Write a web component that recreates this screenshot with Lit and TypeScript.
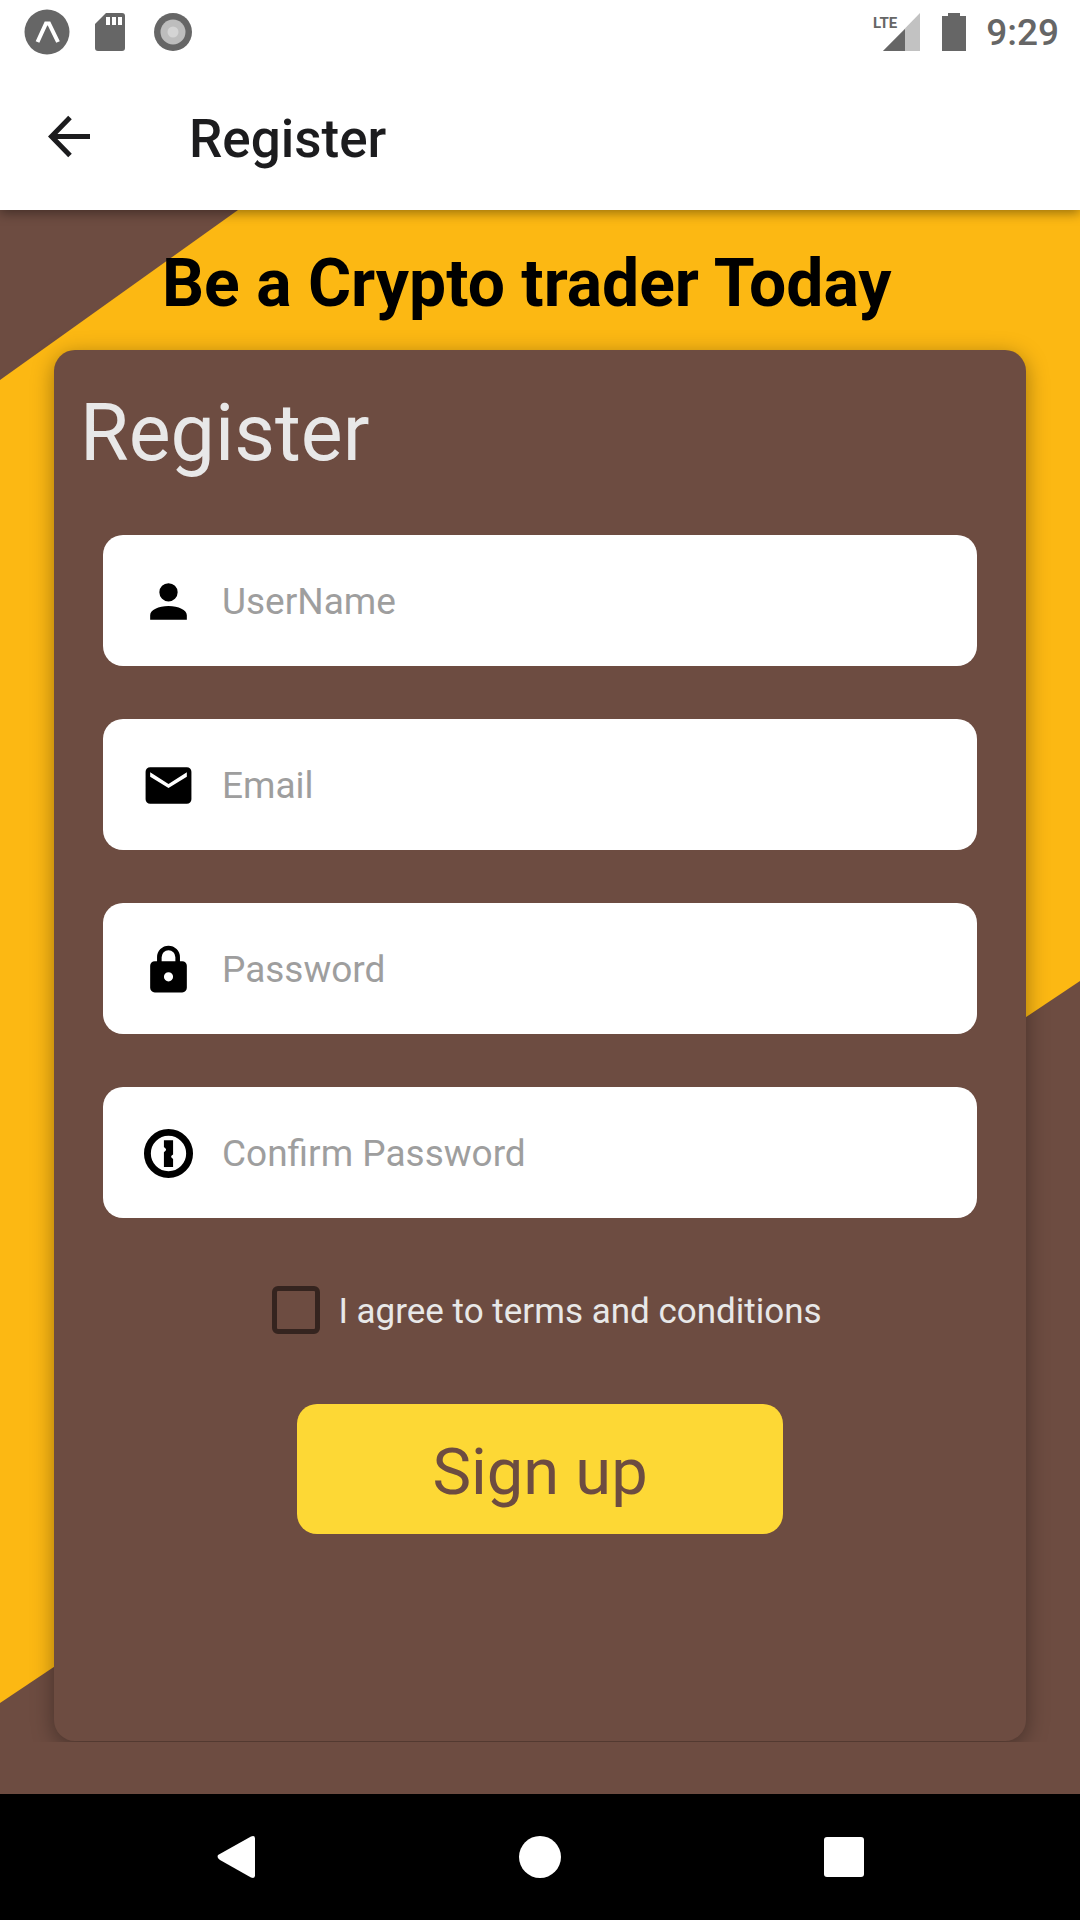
import { LitElement, html, css, svg } from "lit";
import { customElement } from "lit/decorators.js";

interface Field {
  id: string;
  type: string;
  label: string;
  icon: unknown;
}

const FIELDS: Field[] = [
  {
    id: "username",
    type: "text",
    label: "UserName",
    icon: svg`<path d="M12 4a4 4 0 1 1 0 8 4 4 0 0 1 0-8zM12 14c4.400 0 8 1.800 8 4v2H4v-2c0-2.200 3.600-4 8-4z"/>`,
  },
  {
    id: "email",
    type: "email",
    label: "Email",
    icon: svg`<path d="M20 8.200L12 13.100 4 8.200V6.200L12 11.300l8-5.100zM20 4H4a2 2 0 0 0-2 2v12a2 2 0 0 0 2 2h16a2 2 0 0 0 2-2V6a2 2 0 0 0-2-2z"/>`,
  },
  {
    id: "password",
    type: "password",
    label: "Password",
    icon: svg`<path d="M12 17.200a2 2 0 1 0 0-4 2 2 0 0 0 0 4zM18 8.400a2 2 0 0 1 2 2V20a2 2 0 0 1-2 2H6a2 2 0 0 1-2-2v-9.600a2 2 0 0 1 2-2h1V6.600a5 5 0 0 1 10 0v1.800zM12 3.600a3 3 0 0 0-3 3v1.800h6V6.600a3 3 0 0 0-3-3z"/>`,
  },
  {
    id: "confirm",
    type: "password",
    label: "Confirm Password",
    icon: svg`<circle cx="12" cy="12" r="9.200" fill="none" stroke="currentColor" stroke-width="3"/>
      <path d="M10 6.200h4v6.200l-.6.500c-.3.300-.3.700 0 1l.6.500v3.500h-4v-6.500l.7-.6c.3-.3.3-.7 0-1L10 9.200z"/>`,
  },
];

@customElement("app-root")
export class AppRoot extends LitElement {
  static styles = css`
    :host {
      display: flex;
      flex-direction: column;
      min-height: 100vh;
      font-family: Roboto, "Liberation Sans", sans-serif;
      background: #6d4c41;
    }
    * {
      box-sizing: border-box;
    }
    h1,
    h2,
    p {
      margin: 0;
    }
    svg {
      display: block;
      flex: none;
    }
    button {
      border: 0;
      padding: 0;
      background: none;
      font: inherit;
      color: inherit;
      cursor: pointer;
    }
    .status {
      position: relative;
      z-index: 2;
      display: flex;
      justify-content: space-between;
      align-items: center;
      height: 63px;
      padding: 0 21px 0 24px;
      background: #fff;
      color: #666;
    }
    .group {
      display: flex;
      align-items: center;
    }
    .notices {
      gap: 24px;
    }
    .signals {
      gap: 20px;
    }
    .clock {
      padding-top: 2px;
      font-size: 37px;
      line-height: 64px;
      font-weight: 500;
    }
    .bar {
      display: flex;
      align-items: center;
      gap: 90px;
      height: 147px;
      padding: 2px 43px 0;
      background: #fff;
      color: #1c1c1e;
      position: relative;
      z-index: 1;
      box-shadow: 0 3px 11px rgba(0, 0, 0, 0.4);
    }
    .bar-title {
      padding-top: 2px;
      font-size: 53px;
      line-height: 64px;
      font-weight: 500;
    }
    .body {
      position: relative;
      flex: 1;
      display: flex;
      flex-direction: column;
      padding-bottom: 52px;
    }
    .backdrop {
      position: absolute;
      inset: 0;
      width: 100%;
      height: 100%;
    }
    .content {
      position: relative;
      flex: 1;
      display: flex;
      flex-direction: column;
      padding: 34px 5% 1px;
      overflow: hidden;
    }
    .headline {
      padding: 0 0 26px 108px;
      font-size: 66px;
      line-height: 80px;
      font-weight: 700;
      color: #000;
    }
    .card {
      flex: 1;
      padding: 37px 26px;
      border-radius: 21px;
      background: #6d4c41;
      box-shadow: 0 5px 22px rgba(0, 0, 0, 0.36);
      color: #e8e8e8;
    }
    .card-title {
      font-size: 79px;
      line-height: 92px;
      font-weight: 400;
    }
    .form {
      display: flex;
      flex-direction: column;
      align-items: center;
      gap: 53px;
      padding: 56px 23px 0;
    }
    .field {
      display: flex;
      align-items: center;
      gap: 26px;
      width: 100%;
      height: 131px;
      padding: 2px 38px 0;
      border-radius: 20px;
      background: #fff;
      color: #000;
    }
    .input {
      flex: 1;
      min-width: 0;
      border: 0;
      padding: 0;
      outline: 0;
      background: none;
      font: inherit;
      font-size: 37px;
      line-height: 48px;
      color: #000;
    }
    .input::placeholder {
      color: #9e9e9e;
      opacity: 1;
    }
    .agree {
      display: flex;
      align-items: center;
      gap: 18px;
      padding: 13px 0 15px 14px;
      font-size: 35px;
      line-height: 48px;
    }
    .agree-text {
      padding-top: 4px;
    }
    .box {
      appearance: none;
      width: 48px;
      height: 48px;
      margin: 0;
      border: 5px solid #35241f;
      border-radius: 6px;
    }
    .box:checked {
      background: #35241f;
    }
    .signup {
      width: 486px;
      max-width: 100%;
      height: 130px;
      padding-top: 6px;
      border-radius: 20px;
      background: #fdd835;
      color: #6d4c41;
      font-size: 65px;
      line-height: 80px;
    }
    .nav {
      display: flex;
      justify-content: center;
      align-items: center;
      gap: 256px;
      height: 126px;
      background: #000;
      color: #fff;
    }
    .network {
      font-size: 15px;
      font-weight: 700;
    }
  `;

  private renderField(f: Field) {
    return html`
      <label class="field" for=${f.id}>
        <svg width="55" height="55" viewBox="0 0 24 24" fill="currentColor" aria-hidden="true">${f.icon}</svg>
        <input class="input" id=${f.id} type=${f.type} placeholder=${f.label} aria-label=${f.label} />
      </label>
    `;
  }

  render() {
    return html`
      <div class="status">
        <div class="group notices">
          <svg width="46" height="46" viewBox="0 0 46 46" aria-hidden="true">
            <circle cx="23" cy="23" r="22.500" fill="#666" />
            <path d="M13.500 33L22 14.500h3L34 33" fill="none" stroke="#fff" stroke-width="4" />
          </svg>
          <svg width="32" height="40" viewBox="0 0 32 40" aria-hidden="true">
            <path d="M12 1h16a3 3 0 0 1 3 3v32a3 3 0 0 1-3 3H4a3 3 0 0 1-3-3V12z" fill="#666" />
            <path d="M12 5h4v8h-4zM18 5h4v8h-4zM24 5h4v8h-4z" fill="#fff" />
          </svg>
          <svg width="46" height="40" viewBox="0 0 46 40" aria-hidden="true">
            <circle cx="23" cy="20" r="19" fill="#666" />
            <circle cx="23" cy="20" r="12.500" fill="#bdbdbd" />
            <circle cx="23" cy="20" r="5.500" fill="#d4d4d4" />
          </svg>
        </div>
        <div class="group signals">
          <svg width="48" height="40" viewBox="0 0 48 40" role="img" aria-label="LTE signal">
            <path d="M48 1v38H11z" fill="#c2c2c2" />
            <path d="M33 17v22H11z" fill="#666" />
            <text class="network" x="1" y="16" fill="#666">LTE</text>
          </svg>
          <svg width="26" height="40" viewBox="0 0 26 40" aria-hidden="true">
            <path d="M8 1h12v3h6v35H2V4h6z" fill="#666" />
          </svg>
          <span class="clock">9:29</span>
        </div>
      </div>
      <header class="bar">
        <button type="button" aria-label="Back">
          <svg width="56" height="56" viewBox="0 0 56 56" fill="none" stroke="currentColor" stroke-width="5" aria-hidden="true">
            <path d="M47 26.500H9M27 7.500L8.500 26.500 27 45.500" />
          </svg>
        </button>
        <h1 class="bar-title">Register</h1>
      </header>
      <main class="body">
        <svg class="backdrop" viewBox="0 0 1080 1584" preserveAspectRatio="none" aria-hidden="true">
          <path d="M238 0H1080V771L0 1493V170z" fill="#fcb813" />
        </svg>
        <div class="content">
          <p class="headline">Be a Crypto trader Today</p>
          <section class="card">
            <h2 class="card-title">Register</h2>
            <form class="form">
              ${FIELDS.map((f) => this.renderField(f))}
              <label class="agree" for="agree">
                <input class="box" id="agree" type="checkbox" />
                <span class="agree-text">I agree to terms and conditions</span>
              </label>
              <button class="signup" type="button">Sign up</button>
            </form>
          </section>
        </div>
      </main>
      <nav class="nav">
        <button type="button" aria-label="Back">
          <svg width="48" height="48" viewBox="0 0 48 48" fill="currentColor" aria-hidden="true">
            <path d="M6 22L39 3.500q4-1.500 4 2v37q0 3.500-4 2L8 27q-3.500-2.500-2-5z" />
          </svg>
        </button>
        <button type="button" aria-label="Home">
          <svg width="48" height="48" viewBox="0 0 48 48" fill="currentColor" aria-hidden="true">
            <circle cx="24" cy="24" r="21" />
          </svg>
        </button>
        <button type="button" aria-label="Recent apps">
          <svg width="48" height="48" viewBox="0 0 48 48" fill="currentColor" aria-hidden="true">
            <rect x="4" y="4" width="40" height="40" rx="3" />
          </svg>
        </button>
      </nav>
    `;
  }
}
